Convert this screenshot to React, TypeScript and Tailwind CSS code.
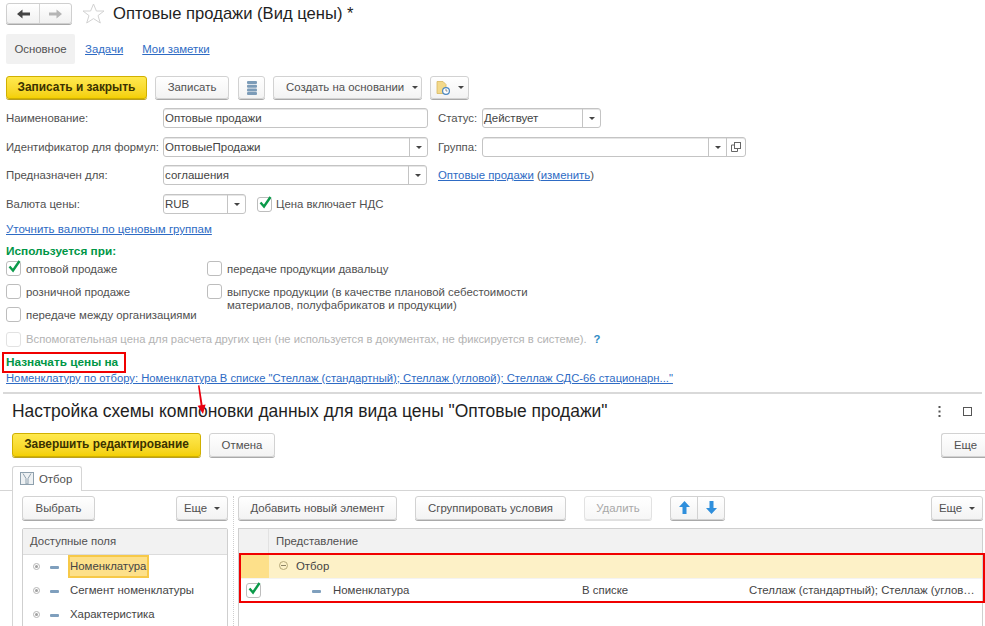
import React from "react";

const linkCls = "text-[#2e6bc4] underline";

function Caret() {
    return <span className="inline-block w-0 h-0 border-x-[3px] border-x-transparent border-t-[3px] border-t-[#444]" />;
}

function Btn({ className = "", children, yellow, disabled }: { className?: string; children?: React.ReactNode; yellow?: boolean; disabled?: boolean }) {
    const tone = yellow
        ? "border-[#d0b000] bg-gradient-to-b from-[#ffe94d] to-[#f4d000] text-[#3a3200] font-bold shadow-[0_1px_0_#b9a020]"
        : disabled
            ? "border-[#e2e2e2] bg-gradient-to-b from-white to-[#f7f7f7] text-[#a8a8a8] shadow-[0_1px_0_#e0e0e0]"
            : "border-[#d2d2d2] bg-gradient-to-b from-white to-[#f3f3f3] text-[#505050] shadow-[0_1px_0_#a9a9a9]";
    return (
        <div className={`flex items-center justify-center shrink-0 whitespace-nowrap rounded-[3px] border ${tone} ${className}`}>
            {children}
        </div>
    );
}

function Field({ className = "", value, arrow, copy }: { className?: string; value?: string; arrow?: boolean; copy?: boolean }) {
    return (
        <div className={`flex h-[20px] shrink-0 items-center rounded-[3px] border border-[#c4c4c4] bg-white text-[11.5px] text-[#444] shadow-[inset_0_1px_0_#e6e6e6] ${className}`}>
            <span className="flex-1 pl-[1px] pt-[1px] truncate">{value}</span>
            {arrow && (
                <span className="flex h-full w-[18px] items-center justify-center border-l border-[#c4c4c4]">
                    <Caret />
                </span>
            )}
            {copy && (
                <span className="flex h-full w-[19px] items-center justify-center border-l border-[#c4c4c4]">
                    <svg width="10" height="10" viewBox="0 0 10 10" fill="none" stroke="#666" strokeWidth="1">
                        <rect x="3.5" y="0.5" width="6" height="6" />
                        <path d="M3.5 3H0.5V9.5H6.5V6.5" />
                    </svg>
                </span>
            )}
        </div>
    );
}

function Check({ on, faint, className = "" }: { on?: boolean; faint?: boolean; className?: string }) {
    return (
        <span className={`relative inline-block h-[15px] w-[15px] shrink-0 rounded-[3px] border bg-white ${faint ? "border-[#e2e2e2]" : "border-[#bdbdbd]"} ${className}`}>
            {on && (
                <svg className="absolute left-[0px] top-[-3px]" width="15" height="15" viewBox="0 0 15 15" fill="none" stroke="#0b9a4a" strokeWidth="2.4">
                    <path d="M2.5 7.5L6 11.5L12.5 2" />
                </svg>
            )}
        </span>
    );
}

function Option({ label, on, className = "" }: { label: React.ReactNode; on?: boolean; className?: string }) {
    return (
        <div className={`flex items-start gap-[5px] text-[#505050] ${className}`}>
            <Check on={on} />
            <span className="leading-[13px] pt-[2px] whitespace-nowrap">{label}</span>
        </div>
    );
}

function Dash({ className = "" }: { className?: string }) {
    return <span className={`inline-block h-[3px] w-[9px] shrink-0 rounded-[1px] bg-[#7f9fbd] ${className}`} />;
}

function Dot() {
    return (
        <span className="flex h-[7px] w-[7px] shrink-0 items-center justify-center rounded-full border border-[#b5b5b5]">
            <span className="h-[3px] w-[3px] rounded-full bg-[#a0a0a0]" />
        </span>
    );
}

function TreeRow({ label, active }: { label: string; active?: boolean }) {
    return (
        <div className="flex h-[24px] items-center pl-[10px]">
            <Dot />
            <Dash className="ml-[10px] mt-[2px]" />
            <span className={`flex h-[23px] items-center whitespace-nowrap text-[#444] ${active ? "ml-[9px] border-2 border-[#f7c948] bg-[#fde08a] pr-[1px]" : "ml-[11px]"}`}>{label}</span>
        </div>
    );
}

export default function App() {
    return (
        <div className="relative h-[626px] w-[985px] overflow-hidden bg-white text-[11.4px] text-[#505050] [font-family:'Liberation_Sans',Arial,sans-serif]">
            <div className="px-[6px]">
                <div className="flex h-[34px] items-start pt-[3px]">
                    <div className="flex h-[21px] w-[66px] rounded-[3px] border border-[#cfcfcf] bg-gradient-to-b from-white to-[#f1f1f1] shadow-[0_1px_0_#a9a9a9]">
                        <span className="flex w-[33px] items-center justify-center border-r border-[#d5d5d5]">
                            <svg width="13" height="10" viewBox="0 0 13 10" fill="#444"><path d="M0 5L5.5 0.5V3.5H13V6.5H5.5V9.5Z" /></svg>
                        </span>
                        <span className="flex flex-1 items-center justify-center">
                            <svg width="13" height="10" viewBox="0 0 13 10" fill="#b5b5b5"><path d="M13 5L7.5 0.5V3.5H0V6.5H7.5V9.5Z" /></svg>
                        </span>
                    </div>
                    <svg className="ml-[10px] mt-[0px]" width="23" height="21" viewBox="0 0 23 21" fill="none" stroke="#d2d2d2" strokeWidth="1">
                        <path d="M11.5 1L14.4 8H22L16 12.6L18.3 20L11.5 15.6L4.7 20L7 12.6L1 8H8.6Z" />
                    </svg>
                    <span className="ml-[8px] text-[16.6px] leading-[21px] text-[#1f1f1f]">Оптовые продажи (Вид цены) *</span>
                </div>

                <div className="flex h-[30px] items-center">
                    <span className="flex h-[30px] w-[69px] items-center justify-center rounded-[2px] bg-[#f1f1f1] pt-[1px]">Основное</span>
                    <span className={`ml-[10px] pt-[1px] ${linkCls}`}>Задачи</span>
                    <span className={`ml-[19px] pt-[1px] ${linkCls}`}>Мои заметки</span>
                </div>

                <div className="mt-[12px] flex h-[23px] items-center">
                    <Btn yellow className="h-[23px] w-[141px] pt-[1px] text-[11.9px]">Записать и закрыть</Btn>
                    <Btn className="ml-[8px] h-[23px] w-[74px]">Записать</Btn>
                    <Btn className="ml-[9px] h-[23px] w-[27px]">
                        <svg width="10" height="14" viewBox="0 0 10 14" fill="#7c9cb8">
                            <rect y="0" width="10" height="3" rx="1" />
                            <rect y="3.7" width="10" height="3" rx="1" />
                            <rect y="7.4" width="10" height="3" rx="1" />
                            <rect y="11" width="10" height="3" rx="1" />
                        </svg>
                    </Btn>
                    <Btn className="ml-[8px] h-[23px] w-[149px] justify-start gap-[8px] pl-[12px]">Создать на основании <Caret /></Btn>
                    <Btn className="ml-[8px] h-[23px] w-[39px] gap-[8px]">
                        <svg width="14" height="14" viewBox="0 0 14 14">
                            <path d="M1 0.5H7L10 3.5V12.5H1Z" fill="#f3d98a" stroke="#d8b860" strokeWidth="0.8" />
                            <circle cx="10" cy="10" r="3.4" fill="#fff" stroke="#4a86c0" strokeWidth="1.2" />
                            <path d="M10 8V10H11.5" stroke="#777" strokeWidth="0.8" fill="none" />
                        </svg>
                        <Caret />
                    </Btn>
                </div>

                <div className="mt-[9px] flex h-[20px] items-center">
                    <span className="w-[157px] shrink-0 pt-[1px]">Наименование:</span>
                    <Field className="w-[265px]" value="Оптовые продажи" />
                    <span className="ml-[10px] w-[44px] shrink-0 pt-[1px]">Статус:</span>
                    <Field className="w-[119px]" value="Действует" arrow />
                </div>
                <div className="mt-[9px] flex h-[20px] items-center">
                    <span className="w-[157px] shrink-0 whitespace-nowrap pt-[1px] text-[11.25px]">Идентификатор для формул:</span>
                    <Field className="w-[265px]" value="ОптовыеПродажи" arrow />
                    <span className="ml-[10px] w-[44px] shrink-0 pt-[1px]">Группа:</span>
                    <Field className="w-[264px]" arrow copy />
                </div>
                <div className="mt-[8px] flex h-[20px] items-center">
                    <span className="w-[157px] shrink-0 pt-[1px]">Предназначен для:</span>
                    <Field className="w-[264px]" value="соглашения" arrow />
                    <span className="ml-[11px] pt-[1px]">
                        <span className={linkCls}>Оптовые продажи</span> (<span className={linkCls}>изменить</span>)
                    </span>
                </div>
                <div className="mt-[9px] flex h-[20px] items-center">
                    <span className="w-[157px] shrink-0 pt-[1px]">Валюта цены:</span>
                    <Field className="w-[83px]" value="RUB" arrow />
                    <Check on className="ml-[11px]" />
                    <span className="ml-[4px] pt-[1px]">Цена включает НДС</span>
                </div>
                <div className={`mt-[8px] leading-[14px] text-[11.5px] ${linkCls}`}>Уточнить валюты по ценовым группам</div>

                <div className="mt-[8px] text-[11.8px] font-bold leading-[14px] text-[#009646]">Используется при:</div>
                <div className="mt-[3px] flex">
                    <div className="flex w-[201px] shrink-0 flex-col gap-[8px]">
                        <Option on label="оптовой продаже" />
                        <Option label="розничной продаже" />
                        <Option label="передаче между организациями" />
                    </div>
                    <div className="flex flex-col gap-[8px]">
                        <Option label="передаче продукции давальцу" />
                        <Option label={<>выпуске продукции (в качестве плановой себестоимости<br />материалов, полуфабрикатов и продукции)</>} />
                    </div>
                </div>
                <div className="mt-[9px] flex items-center gap-[5px] text-[11.25px] text-[#b3b3b3]">
                    <Check faint />
                    <span>Вспомогательная цена для расчета других цен (не используется в документах, не фиксируется в системе).</span>
                    <span className="ml-[2px] font-bold text-[#2e8bc4]">?</span>
                </div>
                <div className="mt-[4px] flex h-[21px] w-[124px] items-center -ml-[4px] border-2 border-[#f00000] bg-white pl-[2px] text-[11.8px] font-bold text-[#009646]">Назначать цены на</div>
                <div className={`-mt-[2px] text-[11.25px] leading-[14px] whitespace-nowrap ${linkCls}`}>
                    Номенклатуру по отбору: Номенклатура В списке "Стеллаж (стандартный); Стеллаж (угловой); Стеллаж СДС-66 стационарн..."
                </div>
            </div>

            <div className="mx-[3px] mt-[7px] h-[2px] bg-[#d9d9d9]" />

            <div className="flex h-[39px] items-center justify-between pb-[4px] pl-[12px] pr-[13px]">
                <span className="text-[17.45px] text-[#1f1f1f]">Настройка схемы компоновки данных для вида цены "Оптовые продажи"</span>
                <div className="flex items-center gap-[22px]">
                    <svg width="3" height="11" viewBox="0 0 3 11" fill="#555">
                        <rect x="0.5" y="0" width="2" height="2" />
                        <rect x="0.5" y="4.5" width="2" height="2" />
                        <rect x="0.5" y="9" width="2" height="2" />
                    </svg>
                    <span className="h-[9px] w-[9px] border border-[#555]" />
                </div>
            </div>

            <div className="flex h-[24px] items-center pl-[12px]">
                <Btn yellow className="h-[24px] w-[189px] pt-[1px] text-[11.85px]">Завершить редактирование</Btn>
                <Btn className="ml-[8px] h-[24px] w-[66px] pt-[1px]">Отмена</Btn>
                <Btn className="ml-auto h-[24px] w-[44px] justify-start rounded-r-none border-r-0 pl-[12px] pt-[1px]">Еще</Btn>
            </div>

            <div className="mt-[9px] flex h-[25px] items-end border-b border-[#d5d5d5] pl-[12px]">
                <div className="flex h-[25px] w-[70px] items-center gap-[5px] rounded-t-[3px] border border-b-0 border-[#d5d5d5] bg-white pl-[7px] -mb-[1px]">
                    <svg width="14" height="13" viewBox="0 0 14 13" fill="none" stroke="#8ea0ad" strokeWidth="1">
                        <rect x="0.5" y="0.5" width="13" height="12" fill="#eef1f3" />
                        <path d="M3 1.5L6 6.5V12H8V6.5L11 1.5" />
                    </svg>
                    <span className="pt-[1px]">Отбор</span>
                </div>
            </div>

            <div className="flex border-l border-[#d5d5d5] ml-[12px] pl-[9px] pt-[5px]">
                <div className="w-[206px] shrink-0">
                    <div className="flex justify-between">
                        <Btn className="h-[24px] w-[73px] pt-[1px]">Выбрать</Btn>
                        <Btn className="h-[24px] w-[52px] gap-[7px] pt-[1px]">Еще <Caret /></Btn>
                    </div>
                    <div className="mt-[8px] h-[200px] rounded-t-[2px] border border-[#cfcfcf]">
                        <div className="flex h-[26px] items-center border-b border-[#dcdcdc] bg-[#f2f2f2] pl-[7px] pt-[1px]">Доступные поля</div>
                        <TreeRow active label="Номенклатура" />
                        <TreeRow label="Сегмент номенклатуры" />
                        <TreeRow label="Характеристика" />
                    </div>
                </div>
                <div className="ml-[5px] w-0 self-stretch border-l border-dotted border-[#cfcfcf]" />
                <div className="ml-[4px] w-[745px] shrink-0">
                    <div className="flex">
                        <Btn className="h-[24px] w-[159px] pt-[1px]">Добавить новый элемент</Btn>
                        <Btn className="ml-[18px] h-[24px] w-[151px] pt-[1px]">Сгруппировать условия</Btn>
                        <Btn disabled className="ml-[18px] h-[24px] w-[68px] pt-[1px]">Удалить</Btn>
                        <div className="ml-[18px] flex h-[24px] w-[55px] rounded-[3px] border border-[#d2d2d2] bg-gradient-to-b from-white to-[#f3f3f3] shadow-[0_1px_0_#a9a9a9]">
                            <span className="flex flex-1 items-center justify-center border-r border-[#d2d2d2]">
                                <svg width="11" height="13" viewBox="0 0 11 13" fill="#2f8fdc"><path d="M5.5 0L11 6H7.5V13H3.5V6H0Z" /></svg>
                            </span>
                            <span className="flex flex-1 items-center justify-center">
                                <svg width="11" height="13" viewBox="0 0 11 13" fill="#2f8fdc"><path d="M5.5 13L11 7H7.5V0H3.5V7H0Z" /></svg>
                            </span>
                        </div>
                        <Btn className="ml-auto h-[24px] w-[52px] gap-[7px] pt-[1px]">Еще <Caret /></Btn>
                    </div>
                    <div className="relative mt-[8px] h-[200px] border border-[#cfcfcf]">
                        <div className="flex h-[25px] items-center border-b border-[#dcdcdc] bg-[#f2f2f2]">
                            <span className="h-full w-[30px] border-r border-[#e2e2e2]" />
                            <span className="pl-[7px] pt-[1px]">Представление</span>
                        </div>
                        <div className="flex h-[24px] items-center bg-[#fdf1c7]">
                            <span className="h-full w-[30px] bg-[#fde08a]" />
                            <span className="ml-[10px] flex h-[9px] w-[9px] items-center justify-center rounded-full border border-[#b5a878]">
                                <span className="h-[1px] w-[5px] bg-[#8d8466]" />
                            </span>
                            <span className="ml-[8px] pt-[1px] text-[#444]">Отбор</span>
                        </div>
                        <div className="flex h-[25px] items-center border-t border-[#f3f3f3] text-[#444]">
                            <Check on className="ml-[7px]" />
                            <Dash className="ml-[51px] mt-[2px]" />
                            <span className="ml-[12px] w-[249px]">Номенклатура</span>
                            <span className="w-[167px]">В списке</span>
                            <span className="whitespace-nowrap">Стеллаж (стандартный); Стеллаж (углов…</span>
                        </div>
                        <div className="absolute left-[0px] top-[24px] h-[50px] w-[746px] border-2 border-[#f00000]" />
                    </div>
                </div>
            </div>

            <svg className="absolute left-[194px] top-[384px]" width="16" height="32" viewBox="0 0 16 32" fill="#e8000f">
                <path d="M4 1.5L5.5 1.2L8.6 21L11.6 20.5L9 30L3.6 21.8L6.6 21.3Z" />
            </svg>
        </div>
    );
}
